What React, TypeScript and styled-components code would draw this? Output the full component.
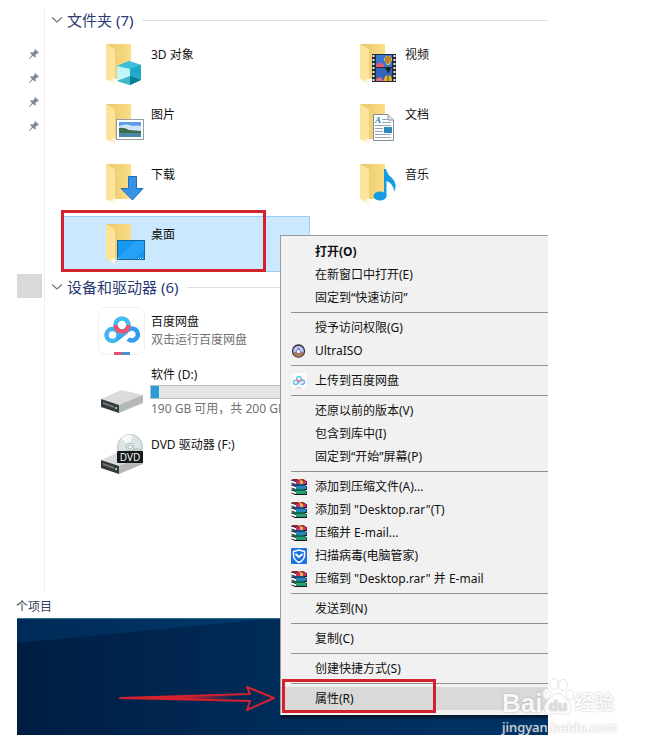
import React from 'react';
import styled, { createGlobalStyle, css } from 'styled-components';

const GlobalStyle = createGlobalStyle`
  * { box-sizing: border-box; }
  body {
    margin: 0;
    background: #fff;
    font-family: 'Noto Sans', 'Noto Sans CJK SC', sans-serif;
    font-size: 12px;
    line-height: 18px;
    color: #111;
  }
  h2, ul, p { margin: 0; padding: 0; }
  button { font: inherit; color: inherit; border: 0; background: none; text-align: left; }
  svg { display: block; flex: none; }
`;

const RED = '#d3222e';

const Frame = styled.main`
  position: relative;
  margin: 0 106px 0 17px;
  padding-top: 8px;
`;

const Explorer = styled.section`
  display: grid;
  grid-template-columns: 28px minmax(0, 1fr);
  min-height: 584px;
`;

const Sidebar = styled.nav`
  display: flex;
  flex-direction: column;
  border-right: 1px solid #f0f0f2;
  padding-top: 34px;
`;

const PinButton = styled.button`
  height: 24px;
  padding: 0 4px 0 11px;
`;

const SidebarSelection = styled.div`
  width: 25px;
  height: 24px;
  margin-top: 136px;
  background: #d9d9d9;
`;

const Content = styled.div`
  min-width: 0;
`;

const GroupHeader = styled.h2`
  font-size: 15px;
  font-weight: 400;
  line-height: 26px;
`;

const GroupToggle = styled.button`
  display: flex;
  align-items: center;
  gap: 5px;
  width: 100%;
  height: 26px;
  padding: 0 0 2px 7px;
  color: #2a3a75;
  white-space: nowrap;

  &::after {
    content: '';
    flex: 1;
    height: 1px;
    margin-left: 4px;
    background: #dfe0e6;
  }
`;

const FolderGrid = styled.div`
  display: grid;
  grid-template-columns: 249px minmax(0, 1fr);
  gap: 4px 5px;
  padding: 2px 0 3px 16px;
`;

const Tile = styled.button<{ $selected?: boolean }>`
  position: relative;
  display: flex;
  gap: 5px;
  height: 56px;
  padding: 6px 0 0 44px;
  border: 1px solid ${p => (p.$selected ? '#99cdf5' : 'transparent')};
  background: ${p => (p.$selected ? '#cce8ff' : 'transparent')};

  & > span:first-of-type { padding-top: 3px; }
`;

const Highlight = styled.i<{ $kind: 'tile' | 'menu' }>`
  position: absolute;
  border: 3px solid ${RED};
  pointer-events: none;
  ${p => p.$kind === 'tile'
    ? css`inset: -7px 43px -1px -1px;`
    : css`inset: -8px auto -3px 1px; width: 154px;`}
`;

const DeviceList = styled.ul`
  list-style: none;
  padding-left: 52px;
`;

const Device = styled.li`
  display: grid;
  grid-template-columns: 50px minmax(0, 1fr);
  gap: 4px;
  min-height: 56px;
  margin-bottom: 9px;
  white-space: nowrap;
`;

const DeviceIcon = styled.div<{ $top: number }>`
  padding-top: ${p => p.$top}px;
`;

const DeviceInfo = styled.div<{ $top: number }>`
  padding-top: ${p => p.$top}px;
`;

const Muted = styled.p`
  color: #717171;
`;

const Usage = styled.div`
  height: 14px;
  margin: 1px 0 1px -1px;
  width: 190px;
  border: 1px solid #bcbcbc;
  background: #e6e6e6;
`;

const UsageFill = styled.div`
  width: 4%;
  height: 100%;
  background: #26a0da;
`;

const StatusBar = styled.footer`
  height: 26px;
  margin-left: -1px;
  padding-top: 6px;
  color: #33425e;
`;

const Desktop = styled.section`
  position: relative;
  display: flex;
  height: 117px;
  padding: 66px 0 0 101px;
  overflow: hidden;
`;

const Wallpaper = styled.svg`
  position: absolute;
  inset: 0;
  width: 100%;
  height: 100%;
`;

const Arrow = styled.svg`
  position: relative;
`;

const Menu = styled.div`
  position: absolute;
  top: 235px;
  left: 263px;
  right: 0;
  padding: 4px 0;
  border: 1px solid #9c9c9c;
  border-right: 0;
  border-bottom-color: #f5f5f5;
  background: #f1f1f1;
  box-shadow: 0 3px 3px rgba(0, 0, 0, 0.55);
  clip-path: inset(0 0 -8px 0);
`;

const MenuItem = styled.button<{ $bold?: boolean; $active?: boolean }>`
  position: relative;
  display: grid;
  grid-template-columns: 16px 1fr;
  gap: 8px;
  align-items: center;
  width: 100%;
  height: 23px;
  padding: 0 0 0 10px;
  font-weight: ${p => (p.$bold ? 700 : 400)};
  background: ${p => (p.$active ? '#d9d9d9' : 'transparent')};
  white-space: nowrap;
`;

const Separator = styled.hr`
  height: 1px;
  margin: 3px 0 3px 10px;
  border: 0;
  background: #919191;
`;

const Watermark = styled.div`
  position: absolute;
  top: 677px;
  right: -72px;
  width: 118px;
  color: #fff;
  font-weight: 700;
  white-space: nowrap;
  text-shadow: 0 0 2px rgba(100, 100, 100, 0.6);
  opacity: 0.8;
`;

const WatermarkLogo = styled.div`
  display: flex;
  align-items: flex-end;
  height: 41px;
  font-family: 'Liberation Sans', 'Noto Sans CJK SC', sans-serif;
  font-size: 26px;
  line-height: 30px;
`;

const WatermarkCjk = styled.span`
  font-size: 20px;
  font-weight: 500;
`;

const WatermarkUrl = styled.div`
  font-size: 13px;
  line-height: 18px;
  font-weight: 500;
`;

const Pin = () => (
  <svg width="12" height="12" viewBox="0 0 12 12" aria-hidden="true">
    <path d="M7 1 L11 5 L10 5.6 L9.2 5.2 L7.5 7 L7.8 9 L7 9.8 L4.9 7.8 L1.2 11.2 L.8 10.8 L4 7 L2.1 5 L3 4.2 L5 4.5 L6.8 2.8 L6.4 1.7Z" fill="#7e8894" />
  </svg>
);

const Chevron = () => (
  <svg width="10" height="6" viewBox="0 0 10 6" aria-hidden="true">
    <path d="M0 .5 L5 5 L10 .5" fill="none" stroke="#6c6f7c" strokeWidth="1.2" />
  </svg>
);

type FolderKind = 'cube' | 'video' | 'picture' | 'document' | 'download' | 'music' | 'desktop';

const overlays: Record<FolderKind, React.ReactNode> = {
  cube: (
    <g>
      <path d="M23 18 L35 22 V37 L24 42 L11 38 V23Z" fill="#37bdd0" />
      <path d="M11 23 L23 18 L35 22 L24 26Z" fill="#3cc0d8" />
      <path d="M11 23 L24 26 V34 L11 38Z" fill="#c3f4f8" />
      <path d="M24 26 L35 22 V37 L24 34Z" fill="#1fa9cb" />
      <path d="M11 38 L24 33 V42Z" fill="#3fb9c6" />
      <path d="M24 33 L35 37 L24 42Z" fill="#0a7d92" />
    </g>
  ),
  video: (
    <g>
      <rect x="12" y="11" width="24" height="28" fill="#222a33" />
      <path d="M13.5 12 V38 M34.5 12 V38" stroke="#e6edf2" strokeWidth="2" strokeDasharray="2 2" />
      <rect x="16" y="12" width="16" height="12" fill="#3977d1" />
      <rect x="16" y="25" width="16" height="13" fill="#3263bd" />
      <path d="M16 22 Q19 17 24 22 V24 H16Z" fill="#e45b70" />
      <path d="M24 17 Q24 13 28 13 Q32 13 32 17 L29 22 H27Z" fill="#f0c44a" />
      <path d="M28 13 V21 M26 14 V20 M30 14 V19" stroke="#7b4416" />
      <path d="M25 25 H31 L28.5 30Z" fill="#171d20" />
      <path d="M16 36 L20 34 L24 38 H16Z" fill="#ee6c68" />
      <path d="M24 38 Q24 32 28 32 Q32 32 32 38Z" fill="#e4b62f" />
      <path d="M28 32 V38" stroke="#684214" />
    </g>
  ),
  picture: (
    <g>
      <rect x="10.5" y="16.5" width="27" height="20" fill="#fff" stroke="#969da3" />
      <rect x="13" y="19" width="22" height="15" fill="#5c9be6" />
      <path d="M13 23 Q20 20 27 23 Q31 22 35 23 V28 H13Z" fill="#cfe5f5" />
      <path d="M13 25 Q18 24 23 27 L35 28 V30 H13Z" fill="#3d6c49" />
      <path d="M13 30 H35 V34 H13Z" fill="#4a86a8" />
    </g>
  ),
  document: (
    <g>
      <path d="M13.5 11.5 H28 L33.5 17 V37.5 H13.5Z" fill="#fff" stroke="#858c92" />
      <path d="M28 11.5 V17 H33" fill="#e8edef" stroke="#858c92" />
      <text x="15" y="20" fontSize="9" fontStyle="italic" fontWeight="700" fontFamily="Liberation Serif" fill="#1685bd">A</text>
      <path d="M22 16.5 H28 M22 19.5 H31 M15 22.5 H31 M15 25.5 H23 M15 28.5 H23 M15 31.5 H31 M15 34.5 H31" stroke="#8fa9b6" />
      <rect x="24" y="24" width="8" height="6" fill="#2e88b9" />
    </g>
  ),
  download: <path d="M22.5 13.5 H30.5 V25.5 H37 L26.5 37 L15 25.5 H22.5Z" fill="#3893e6" stroke="#1c6fbc" />,
  music: (
    <g fill="#169be2">
      <ellipse cx="20" cy="33" rx="6.5" ry="4.5" />
      <path d="M24 6 H26 Q27 11 32 15 Q38 21 34 29 Q34 21 26.5 18 V33 H24Z" />
    </g>
  ),
  desktop: (
    <g>
      <rect x="11.5" y="17.5" width="27" height="19" fill="#1597f2" stroke="#14669f" />
      <path d="M12 35 L30 18 H38 V27 L28 36 H12Z" fill="#35aafc" opacity=".6" />
      <path d="M12 35.5 H14 M32 35.5 H37" stroke="#d8f1ff" strokeDasharray="1 1" />
    </g>
  ),
};

const FolderIcon = ({ kind }: { kind: FolderKind }) => (
  <svg width="40" height="44" viewBox="0 0 40 44" aria-hidden="true">
    <defs>
      <linearGradient id={`fold-${kind}`} x1="0" x2="1">
        <stop offset="0" stopColor="#e9c868" />
        <stop offset="1" stopColor="#fbdd88" />
      </linearGradient>
    </defs>
    <path d="M0 1 H25 V36 H9Z" fill={`url(#fold-${kind})`} />
    <path d="M0 1 L7 5 Q9 6 9 8 V41 L0 36Z" fill="#fde49b" />
    <path d="M4 38 L9 34 V41Z" fill="#fff4dc" />
    {overlays[kind]}
  </svg>
);

const CloudMark = () => (
  <g fill="none" strokeWidth="4.5">
    <circle cx="15.5" cy="28" r="6" stroke="#41b4f0" />
    <path d="M20 32 L30 24" stroke="#38a8f2" />
    <path d="M30 24 A6 6 0 1 1 31 32" stroke="#329cf0" />
    <circle cx="25" cy="18" r="6.5" stroke="#45bdf2" />
    <path d="M18.5 18 A6.5 6.5 0 0 0 31.5 18" stroke="#ec5672" />
  </g>
);

const NetDiskIcon = () => (
  <svg width="50" height="50" viewBox="0 0 50 50" aria-hidden="true">
    <rect x="1.5" y=".5" width="46" height="47" rx="7" fill="#fff" stroke="#f1f1f4" />
    <CloudMark />
    <path d="M17 46.5 H25" stroke="#e2546b" strokeWidth="3" />
    <path d="M25 46.5 H33" stroke="#4a8fd8" strokeWidth="3" />
  </svg>
);

const DriveBody = () => (
  <g>
    <path d="M0 9 L20 0 L42 5 L18 16Z" fill="#dadbdd" />
    <path d="M18 15 L42 5 V13 L18 23Z" fill="#b6b7b9" />
    <path d="M0 9 L18 15 V23 L0 17Z" fill="#363a3c" />
    <path d="M2 12 L13 16 V18 L2 14Z" fill="#747a7c" />
    <rect x="14" y="17" width="2" height="2" fill="#6ce184" />
  </g>
);

const DriveIcon = () => (
  <svg width="46" height="24" viewBox="-4 0 46 24" aria-hidden="true"><DriveBody /></svg>
);

const DvdIcon = () => (
  <svg width="46" height="42" viewBox="-4 0 46 42" aria-hidden="true">
    <g transform="translate(0 17)"><DriveBody /></g>
    <circle cx="29" cy="13" r="12.5" fill="#dce5e5" stroke="#b4bfc0" />
    <path d="M29 13 L20 4 Q25 0 31 1Z" fill="#f6faf9" />
    <path d="M29 13 L41 15 Q40 21 35 24Z" fill="#bccdcb" />
    <circle cx="29" cy="13" r="4" fill="#edf2f1" stroke="#b0bbbc" />
    <circle cx="29" cy="13" r="2" fill="#fff" stroke="#a7b1b1" />
    <rect x="16" y="17" width="26" height="12" rx="1" fill="#16191b" />
    <text x="29" y="27" textAnchor="middle" fontSize="10" fontFamily="Open Sans" fill="#fff">DVD</text>
  </svg>
);

const books: [string, string, number][] = [
  ['#cf2a74', '#93203c', 0],
  ['#2583bd', '#17507c', 5],
  ['#22a070', '#146a4c', 10],
];

const RarIcon = () => (
  <svg width="16" height="16" viewBox="0 0 16 16" aria-hidden="true">
    {books.map(([spine, cover, y]) => (
      <g key={spine} transform={`translate(0 ${y})`}>
        <path d="M0 1 V4 L4 6 H16 V2Z" fill="#1c1418" />
        <path d="M0 1.5 L5 3 V5 L0 3.5Z" fill="#fff" />
        <path d="M5 2 H15.5 V5 H5Z" fill={spine} />
        <path d="M0 .5 L2 0 H12 L15 1.5 L14 2 H4Z" fill={cover} />
      </g>
    ))}
    <path d="M6 0 H9 L12 2 H9Z" fill="#d99b33" />
    <path d="M9 2 H12 V5 H9Z" fill="#e9b545" />
  </svg>
);

const ShieldIcon = () => (
  <svg width="16" height="16" viewBox="0 0 16 16" aria-hidden="true">
    <rect width="16" height="16" rx="1" fill="#1d72df" />
    <path d="M8 2 L13.5 3.5 V8 Q13 12 8 14.5 Q3 12 2.5 8 V3.5Z" fill="none" stroke="#fff" strokeWidth="1.5" />
    <path d="M4.5 6 L8 9 L11.5 6" fill="none" stroke="#fff" strokeWidth="2" />
  </svg>
);

const UltraIcon = () => (
  <svg width="16" height="16" viewBox="0 0 16 16" aria-hidden="true">
    <circle cx="7.5" cy="8" r="6" fill="#bac4ef" stroke="#2e2c3c" strokeWidth="1.3" />
    <path d="M2 9 L13 9 Q12 14 7.5 14 Q3 14 2 9Z" fill="#ad7953" />
    <path d="M4 10 L7.5 4 L11 10Z" fill="#8180c6" />
    <circle cx="7.5" cy="8.5" r="1.5" fill="#fff" />
  </svg>
);

const SmallCloudIcon = () => (
  <svg width="16" height="16" viewBox="3 1 44 46" aria-hidden="true">
    <rect x="3" y="1" width="44" height="46" rx="7" fill="#fcfcfd" />
    <g opacity=".75"><CloudMark /></g>
    <path d="M18 44 H31" stroke="#bcb6dc" strokeWidth="3" />
  </svg>
);

const Paw = () => (
  <svg width="32" height="40" viewBox="0 0 32 40" aria-hidden="true">
    <g fill="#fff" stroke="#d3d5d9" strokeWidth=".8">
      <ellipse cx="4.5" cy="16" rx="4" ry="5.5" />
      <ellipse cx="12" cy="6" rx="4.5" ry="5.5" />
      <ellipse cx="21" cy="7" rx="4.5" ry="5.5" />
      <ellipse cx="28" cy="17" rx="3.8" ry="5" />
      <path d="M16 15 Q20 15 23 20 Q30 25 29 31 Q28 38 21 36 Q16 35 11 36 Q3 38 2 31 Q1 26 9 20 Q12 15 16 15Z" />
    </g>
    <text x="16" y="33" textAnchor="middle" fontSize="15" fontFamily="Liberation Sans" fontWeight="700" fill="#d3d6da">du</text>
  </svg>
);

const folders: { name: string; kind: FolderKind; selected?: boolean }[] = [
  { name: '3D 对象', kind: 'cube' },
  { name: '视频', kind: 'video' },
  { name: '图片', kind: 'picture' },
  { name: '文档', kind: 'document' },
  { name: '下载', kind: 'download' },
  { name: '音乐', kind: 'music' },
  { name: '桌面', kind: 'desktop', selected: true },
];

type Entry = { label: string; icon?: React.ReactNode; bold?: boolean; active?: boolean };

const menuGroups: Entry[][] = [
  [{ label: '打开(O)', bold: true }, { label: '在新窗口中打开(E)' }, { label: '固定到“快速访问”' }],
  [{ label: '授予访问权限(G)' }, { label: 'UltraISO', icon: <UltraIcon /> }],
  [{ label: '上传到百度网盘', icon: <SmallCloudIcon /> }],
  [{ label: '还原以前的版本(V)' }, { label: '包含到库中(I)' }, { label: '固定到“开始”屏幕(P)' }],
  [
    { label: '添加到压缩文件(A)...', icon: <RarIcon /> },
    { label: '添加到 "Desktop.rar"(T)', icon: <RarIcon /> },
    { label: '压缩并 E-mail...', icon: <RarIcon /> },
    { label: '扫描病毒(电脑管家)', icon: <ShieldIcon /> },
    { label: '压缩到 "Desktop.rar" 并 E-mail', icon: <RarIcon /> },
  ],
  [{ label: '发送到(N)' }],
  [{ label: '复制(C)' }],
  [{ label: '创建快捷方式(S)' }],
  [{ label: '属性(R)', active: true }],
];

const Group = ({ title, children }: { title: string; children: React.ReactNode }) => (
  <section>
    <GroupHeader>
      <GroupToggle aria-expanded="true"><Chevron />{title}</GroupToggle>
    </GroupHeader>
    {children}
  </section>
);

export default function App() {
  return (
    <>
      <GlobalStyle />
      <Frame>
        <Explorer>
          <Sidebar>
            {[1, 2, 3, 4].map(n => <PinButton key={n} aria-label={`固定项 ${n}`}><Pin /></PinButton>)}
            <SidebarSelection />
          </Sidebar>
          <Content>
            <Group title="文件夹 (7)">
              <FolderGrid>
                {folders.map(f => (
                  <Tile key={f.kind} $selected={f.selected}>
                    <FolderIcon kind={f.kind} />
                    <span>{f.name}</span>
                    {f.selected && <Highlight $kind="tile" />}
                  </Tile>
                ))}
              </FolderGrid>
            </Group>
            <Group title="设备和驱动器 (6)">
              <DeviceList>
                <Device>
                  <DeviceIcon $top={6}><NetDiskIcon /></DeviceIcon>
                  <DeviceInfo $top={12}>
                    <p>百度网盘</p>
                    <Muted>双击运行百度网盘</Muted>
                  </DeviceInfo>
                </Device>
                <Device>
                  <DeviceIcon $top={24}><DriveIcon /></DeviceIcon>
                  <DeviceInfo $top={0}>
                    <p>软件 (D:)</p>
                    <Usage role="img" aria-label="软件 (D:)"><UsageFill /></Usage>
                    <Muted>190 GB 可用，共 200 GB</Muted>
                  </DeviceInfo>
                </Device>
                <Device>
                  <DeviceIcon $top={3}><DvdIcon /></DeviceIcon>
                  <DeviceInfo $top={5}><p>DVD 驱动器 (F:)</p></DeviceInfo>
                </Device>
              </DeviceList>
            </Group>
          </Content>
        </Explorer>
        <StatusBar>个项目</StatusBar>
        <Desktop>
          <Wallpaper viewBox="0 0 531 117" preserveAspectRatio="none" aria-hidden="true">
            <defs>
              <linearGradient id="night" x1="0" x2="1">
                <stop offset="0" stopColor="#001d42" />
                <stop offset=".5" stopColor="#002c59" />
                <stop offset="1" stopColor="#003468" />
              </linearGradient>
              <linearGradient id="beam" x1="0" x2="1">
                <stop offset="0" stopColor="#002a56" />
                <stop offset="1" stopColor="#003a6e" />
              </linearGradient>
            </defs>
            <rect width="531" height="117" fill="url(#night)" />
            <path d="M0 0 H260 L0 25Z" fill="url(#beam)" />
            <path d="M0 .5 H531" stroke="#2f6f92" />
          </Wallpaper>
          <Arrow width="160" height="28" viewBox="0 0 160 28" aria-hidden="true">
            <defs>
              <linearGradient id="shaft" x1="0" x2="1">
                <stop offset=".4" stopColor={RED} />
                <stop offset=".75" stopColor={RED} stopOpacity="0" />
              </linearGradient>
            </defs>
            <path d="M2 14 L132 10 L129 3 L156 14 L129 26 L132 17Z" fill="url(#shaft)" stroke={RED} strokeWidth="2" strokeLinejoin="round" />
          </Arrow>
        </Desktop>
        <Menu role="menu">
          {menuGroups.map((group, i) => (
            <React.Fragment key={group[0].label}>
              {i > 0 && <Separator />}
              {group.map(item => (
                <MenuItem key={item.label} role="menuitem" $bold={item.bold} $active={item.active}>
                  <span>{item.icon}</span>
                  <span>{item.label}</span>
                  {item.active && <Highlight $kind="menu" />}
                </MenuItem>
              ))}
            </React.Fragment>
          ))}
        </Menu>
        <Watermark>
          <WatermarkLogo>
            <span>Bai</span>
            <Paw />
            <WatermarkCjk>经验</WatermarkCjk>
          </WatermarkLogo>
          <WatermarkUrl>jingyan.baidu.com</WatermarkUrl>
        </Watermark>
      </Frame>
    </>
  );
}
